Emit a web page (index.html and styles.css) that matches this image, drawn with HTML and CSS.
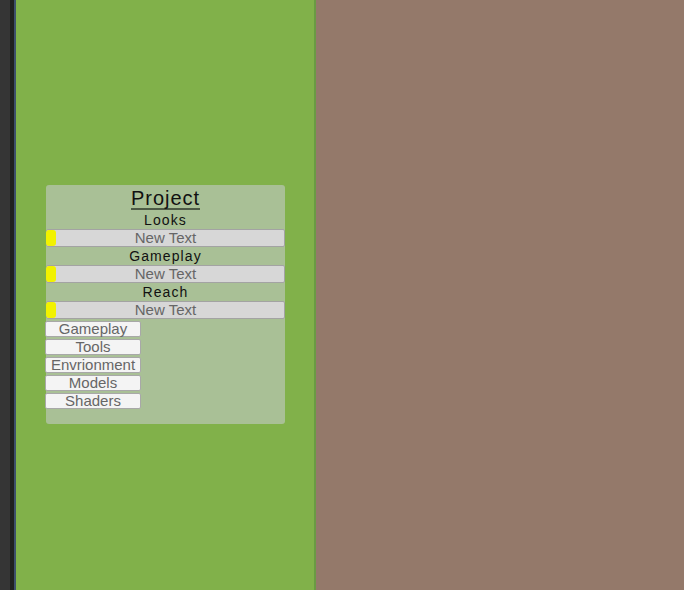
FILE: index.html
```html
<!DOCTYPE html>
<html>
<head>
<meta charset="utf-8">
<link rel="stylesheet" href="styles.css">
</head>
<body>
<div class="app">
  <div class="edge-dark"></div>
  <div class="edge-darker"></div>
  <div class="edge-blue"></div>
  <div class="green">
    <div class="panel">
      <div class="title"><span>Project</span></div>
      <div class="label">Looks</div>
      <div class="bar"><span class="knob"></span>New Text</div>
      <div class="label">Gameplay</div>
      <div class="bar"><span class="knob"></span>New Text</div>
      <div class="label">Reach</div>
      <div class="bar"><span class="knob"></span>New Text</div>
      <div class="buttons">
        <div class="btn">Gameplay</div>
        <div class="btn">Tools</div>
        <div class="btn">Envrionment</div>
        <div class="btn">Models</div>
        <div class="btn">Shaders</div>
      </div>
    </div>
  </div>
  <div class="divider"></div>
  <div class="brown"></div>
</div>
</body>
</html>
```
FILE: styles.css
```css
html, body {
  margin: 0;
  padding: 0;
  width: 684px;
  height: 590px;
  overflow: hidden;
  font-family: "Liberation Sans", Arial, sans-serif;
}
.app {
  display: flex;
  height: 590px;
}
.edge-dark { width: 10px; background: #353535; }
.edge-darker { width: 4px; background: #202020; }
.edge-blue { width: 2px; background: #3d4f6b; }
.green {
  width: 298px;
  background: #81b14a;
  padding: 185px 0 0 30px;
  box-sizing: border-box;
}
.divider { width: 2px; background: #6a9a43; }
.brown { flex: 1; background: #94796a; }
.panel {
  width: 239px;
  height: 239px;
  background: #a9c096;
  border-radius: 3px;
  display: flex;
  flex-direction: column;
  box-sizing: border-box;
}
.title {
  height: 26px;
  text-align: center;
  font-size: 20px;
  line-height: 26px;
  letter-spacing: 1px;
  color: #111;
}
.title span {
  border-bottom: 2px solid #4d5a45;
  line-height: 20px;
  display: inline-block;
}
.label {
  height: 18px;
  line-height: 18px;
  text-align: center;
  font-size: 14px;
  letter-spacing: 1.1px;
  color: #111;
}
.bar {
  position: relative;
  height: 18px;
  box-sizing: border-box;
  background: #d7d7d7;
  border: 1px solid #a3a3a3;
  border-radius: 2px;
  text-align: center;
  font-size: 15px;
  line-height: 16px;
  color: #666;
}
.knob {
  position: absolute;
  left: -1px;
  top: 0;
  width: 10px;
  height: 16px;
  background: #f2f200;
  border-radius: 3px;
}
.buttons {
  display: flex;
  flex-direction: column;
  gap: 2px;
  margin-top: 2px;
  margin-left: -1px;
}
.btn {
  width: 96px;
  height: 16px;
  box-sizing: border-box;
  background: #f4f4f4;
  border: 1px solid #a8a8a8;
  border-radius: 2px;
  text-align: center;
  font-size: 15px;
  line-height: 14px;
  color: #666;
}
```
